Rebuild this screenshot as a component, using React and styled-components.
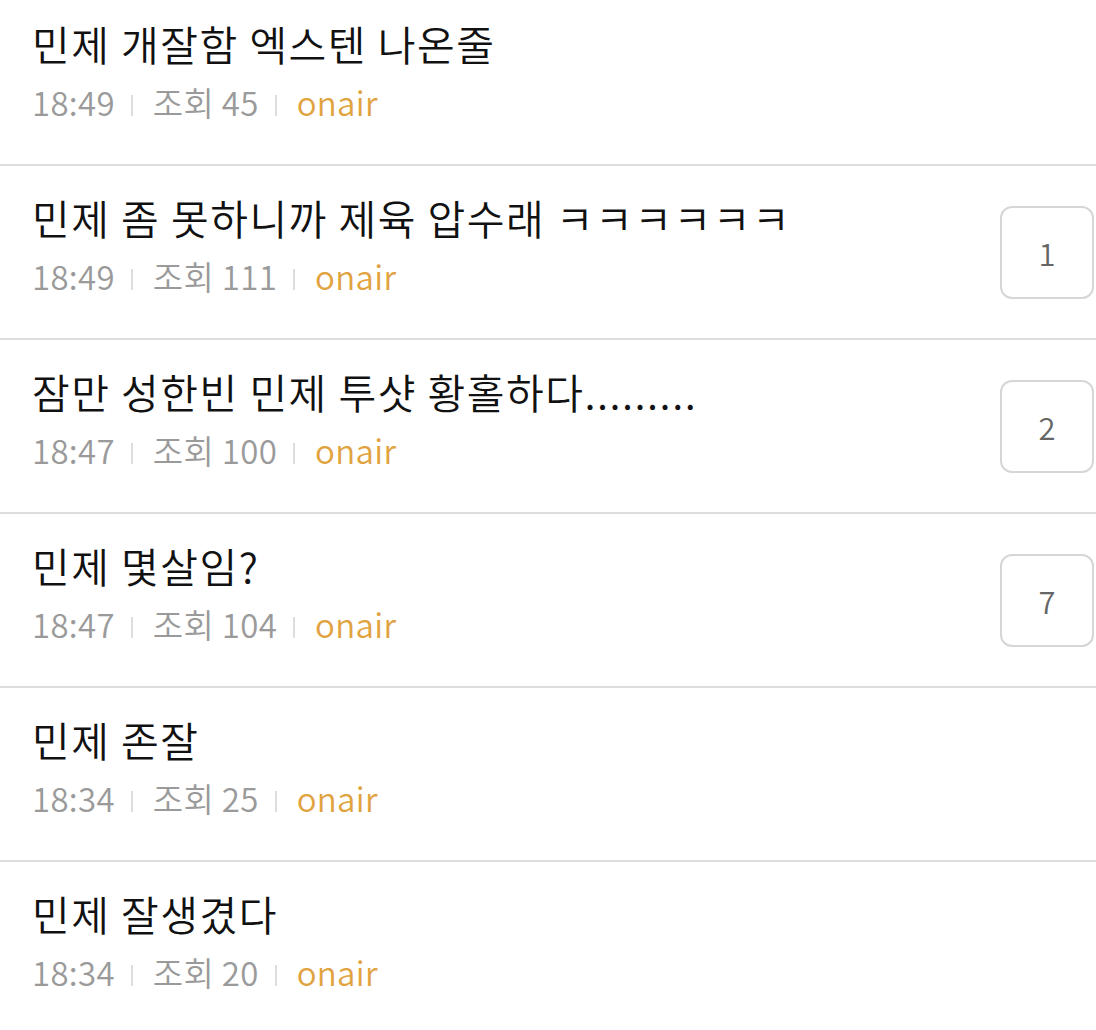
import React from "react";
import styled, { createGlobalStyle } from "styled-components";

const GlobalStyle = createGlobalStyle`
  body {
    margin: 0;
    background: #fff;
    font-family: "Noto Sans CJK KR", "Noto Sans", sans-serif;
  }
`;

const List = styled.ul`
  list-style: none;
  margin: -8px 0 0 0;
  padding: 0;
`;

const Row = styled.li`
  display: flex;
  align-items: center;
  height: 172px;
  padding: 0 2px 0 32px;
  border-bottom: 2px solid #dddddd;
`;

const Body = styled.div`
  flex: 1;
  align-self: flex-start;
  padding-top: 27px;
  display: flex;
  flex-direction: column;
  gap: 15px;
`;

const Title = styled.div`
  font-size: 41px;
  font-weight: 350;
  line-height: 48px;
  letter-spacing: 1.5px;
  color: #111;
  white-space: nowrap;
`;

const Meta = styled.div`
  display: flex;
  align-items: center;
  font-size: 33px;
  font-weight: 350;
  line-height: 40px;
  letter-spacing: 0.3px;
  color: #9a9a9a;
`;

const Bar = styled.span`
  display: inline-block;
  width: 2px;
  height: 21px;
  margin: 7px 20px 0 16px;
  background: #dddddd;
`;

const Writer = styled.span`
  color: #e1a33f;
`;

const Count = styled.div`
  flex: none;
  width: 94px;
  height: 93px;
  box-sizing: border-box;
  border: 2px solid #d6d6d6;
  border-radius: 12px;
  display: flex;
  align-items: center;
  justify-content: center;
  font-size: 31px;
  font-weight: 350;
  color: #666;
`;

const posts = [
  { title: "민제 개잘함 엑스텐 나온줄", time: "18:49", views: 45, comments: 0 },
  { title: "민제 좀 못하니까 제육 압수래 ㅋㅋㅋㅋㅋㅋ", time: "18:49", views: 111, comments: 1 },
  { title: "잠만 성한빈 민제 투샷 황홀하다.........", time: "18:47", views: 100, comments: 2 },
  { title: "민제 몇살임?", time: "18:47", views: 104, comments: 7 },
  { title: "민제 존잘", time: "18:34", views: 25, comments: 0 },
  { title: "민제 잘생겼다", time: "18:34", views: 20, comments: 0 },
];

const App = () => {
  return (
    <>
      <GlobalStyle />
      <List>
        {posts.map((p, i) => (
          <Row key={i}>
            <Body>
              <Title>{p.title}</Title>
              <Meta>
                <span>{p.time}</span>
                <Bar />
                <span>조회 {p.views}</span>
                <Bar />
                <Writer>onair</Writer>
              </Meta>
            </Body>
            {p.comments > 0 && <Count>{p.comments}</Count>}
          </Row>
        ))}
      </List>
    </>
  );
};

export default App;
